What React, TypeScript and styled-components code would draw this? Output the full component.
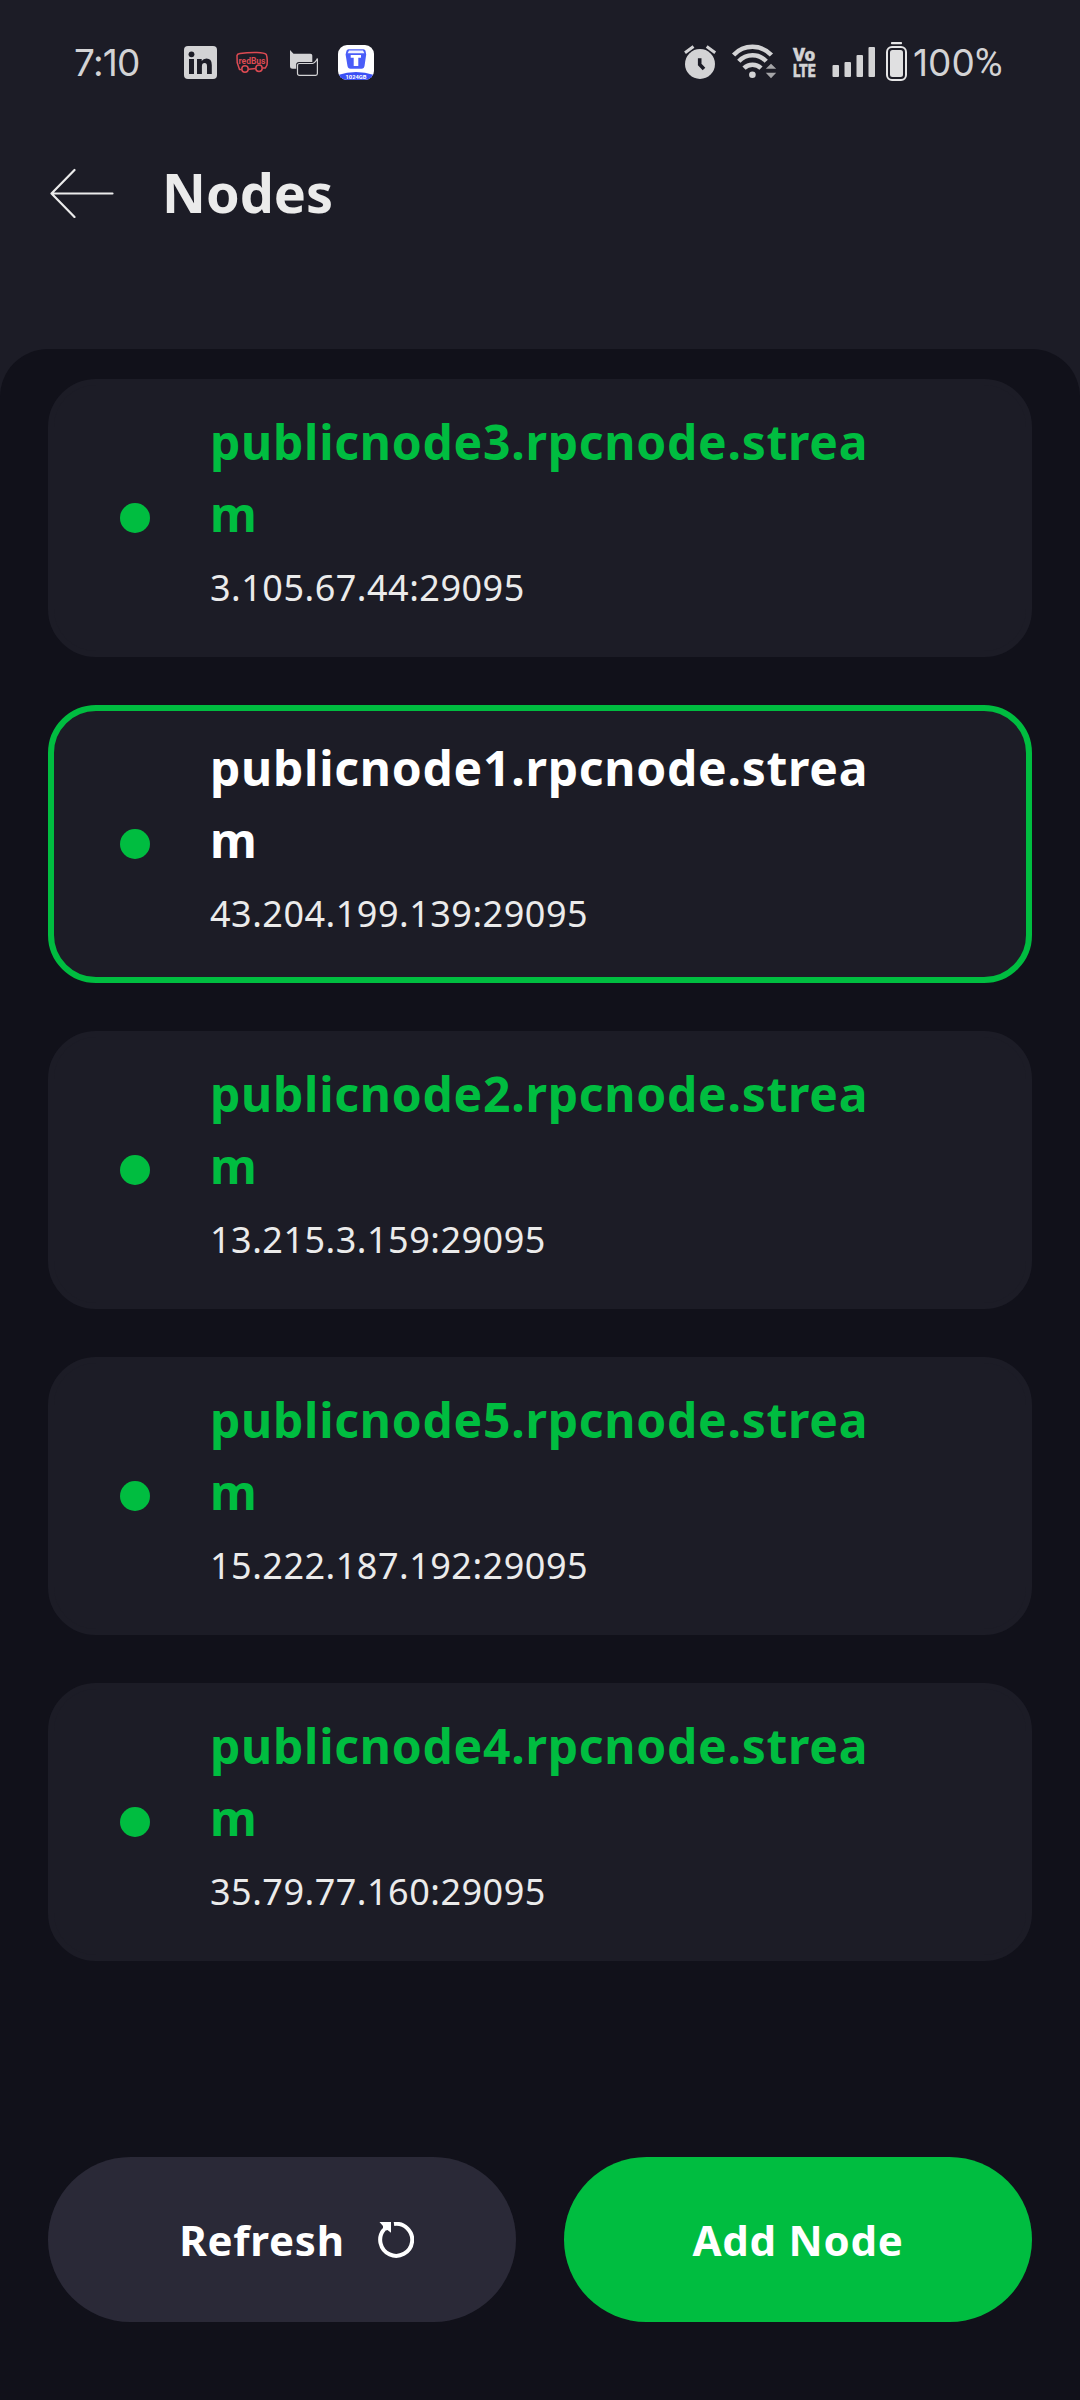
import React from "react";
import styled, { createGlobalStyle } from "styled-components";

const GREEN = "#00bd40";
const SURFACE = "#1c1c26";
const BACKDROP = "#11111a";
const STATUS = "#d3d3d5";

const GlobalStyle = createGlobalStyle`
  *, *::before, *::after { box-sizing: border-box; }
  body { margin: 0; background: ${SURFACE}; }
`;

const Screen = styled.div`
  width: 1080px;
  height: 2400px;
  display: flex;
  flex-direction: column;
  overflow: hidden;
  background: ${SURFACE};
  font-family: "Noto Sans", "Open Sans", sans-serif;
`;

const StatusBar = styled.div`
  display: flex;
  justify-content: space-between;
  height: 124px;
  padding: 42px 76px 0 74px;
  color: ${STATUS};
`;

const StatusGroup = styled.div`
  display: flex;
  align-items: flex-start;
  height: 40px;
`;

const StatusText = styled.span<{ $width: number; $gap?: number; $spacing?: number }>`
  width: ${(p) => p.$width}px;
  margin-left: ${(p) => p.$gap ?? 0}px;
  font-family: Inter, sans-serif;
  font-size: 37px;
  font-weight: 430;
  line-height: 41px;
  letter-spacing: ${(p) => p.$spacing ?? 0}px;
  white-space: nowrap;
`;

const Percent = styled.span`
  font-family: Roboto, sans-serif;
  font-size: 38px;
  line-height: 1;
`;

const StatusIcon = styled.svg<{ $gap: number }>`
  display: block;
  flex: none;
  height: 40px;
  margin-left: ${(p) => p.$gap}px;
  overflow: visible;
`;

const Header = styled.header`
  display: flex;
  align-items: center;
  height: 138px;
  padding-left: 49px;
  margin-bottom: 87px;
`;

const BackArrow = styled.svg`
  display: block;
  width: 66px;
  height: 50px;
`;

const Title = styled.h1`
  margin: 0 0 2px 47px;
  color: #ebebeb;
  font-size: 54px;
  line-height: 74px;
  font-weight: 700;
`;

const Panel = styled.main`
  flex: 1;
  display: flex;
  flex-direction: column;
  justify-content: space-between;
  padding: 30px 48px 78px;
  border-radius: 48px 48px 0 0;
  background: ${BACKDROP};
`;

const NodeList = styled.div`
  display: flex;
  flex-direction: column;
  gap: 48px;
`;

const NodeCard = styled.div<{ $selected: boolean }>`
  display: flex;
  align-items: center;
  height: 278px;
  padding-left: 66px;
  border: 6px solid ${(p) => (p.$selected ? GREEN : SURFACE)};
  border-radius: 48px;
  background: ${SURFACE};
`;

const StatusDot = styled.span`
  flex: none;
  width: 30px;
  height: 30px;
  border-radius: 50%;
  background: ${GREEN};
`;

const NodeInfo = styled.div`
  width: 672px;
  margin-left: 60px;
  padding-bottom: 15px;
`;

const NodeName = styled.div<{ $selected: boolean }>`
  color: ${(p) => (p.$selected ? "#ffffff" : GREEN)};
  font-size: 48px;
  line-height: 72px;
  font-weight: 700;
  letter-spacing: 0.75px;
  word-break: break-all;
`;

const NodeAddress = styled.div`
  margin-top: 11px;
  color: #ebebeb;
  font-size: 36px;
  line-height: 54px;
  letter-spacing: 0.5px;
`;

const Actions = styled.div`
  display: grid;
  grid-template-columns: 1fr 1fr;
  gap: 48px;
`;

const ActionButton = styled.button<{ $primary?: boolean }>`
  display: flex;
  align-items: center;
  justify-content: center;
  gap: 33px;
  height: 165px;
  padding: 0 0 0 ${(p) => (p.$primary ? 0 : 29)}px;
  border: 0;
  border-radius: 83px;
  background: ${(p) => (p.$primary ? GREEN : "#2a2937")};
  color: #ffffff;
  font: 700 42px/58px "Noto Sans", "Open Sans", sans-serif;
  letter-spacing: 0.75px;
`;

const RefreshIcon = styled.svg`
  display: block;
  width: 36px;
  height: 36px;
  margin-top: 1px;
`;

const nodes = [
  { name: "publicnode3.rpcnode.stream", address: "3.105.67.44:29095" },
  { name: "publicnode1.rpcnode.stream", address: "43.204.199.139:29095", selected: true },
  { name: "publicnode2.rpcnode.stream", address: "13.215.3.159:29095" },
  { name: "publicnode5.rpcnode.stream", address: "15.222.187.192:29095" },
  { name: "publicnode4.rpcnode.stream", address: "35.79.77.160:29095" },
];

const LinkedIn = () => (
  <StatusIcon $gap={37} width={33} viewBox="0 0 33 40">
    <rect x="0" y="4" width="33" height="33" rx="4" fill={STATUS} />
    <g fill={SURFACE}>
      <circle cx="7.500" cy="12.300" r="2.900" />
      <path d="M5 17H10V32H5Z" />
      <path d="M13 17H17.700V19.100Q19.300 16.600 22.500 16.600 27.800 16.600 27.800 23V32H23V24.200Q23 20.900 20.600 20.900 17.900 20.900 17.900 24.200V32H13Z" />
    </g>
  </StatusIcon>
);

const RedBus = () => (
  <StatusIcon $gap={19} width={33} viewBox="0 0 33 40">
    <g fill="none" stroke="#dc4a52" strokeWidth="1.500">
      <path d="M5.500 27.500H3.500L1.200 20.500 1 13.500Q1.300 12 4 11.600 12 10.300 21 10.500 28.500 10.600 30.300 12.600 31.800 16.500 31 23L29.300 26H26.500M12.500 27.300 19.500 26.500" />
      <circle cx="9" cy="27" r="3.200" />
      <circle cx="23" cy="26.200" r="3.200" />
    </g>
    <text x="2.500" y="22" fill="#dc4a52" fontFamily="Roboto, sans-serif" fontWeight="700" fontSize="9.200" textLength="27" lengthAdjust="spacingAndGlyphs">
      redBus
    </text>
  </StatusIcon>
);

const Chats = () => (
  <StatusIcon $gap={21} width={29} viewBox="0 0 29 40">
    <path d="M0 8 3.500 11.700H20.500Q22.300 11.700 22.300 13.500V20H9Q6.200 20 6.200 22.500V26.700H2.500Q0 26.700 0 24.200Z" fill={STATUS} />
    <path d="M27.400 16.500V31.500Q27.400 33.300 25.600 33.300H9.500Q7.500 33.300 7.500 31.500V23.500Q7.500 21.500 9.500 21.500H22.500Q25 21 27.400 16.500Z" fill="none" stroke={STATUS} strokeWidth="1.200" />
  </StatusIcon>
);

const StorageApp = () => (
  <StatusIcon $gap={19} width={36} viewBox="0 0 36 40">
    <defs>
      <clipPath id="app-tile">
        <rect x="0" y="3" width="36" height="35" rx="9" />
      </clipPath>
    </defs>
    <g clipPath="url(#app-tile)">
      <rect y="3" width="36" height="35" fill="#fff" />
      <path d="M0 33Q18 27 36 33V38H0Z" fill="#3b50f5" />
      <path d="M10.500 7.200H25.500Q27 7.200 27.500 8.700L28.200 12.500 26.600 23.500Q26.100 26.700 23.500 26.700H12.500Q9.900 26.700 9.400 23.500L7.600 12.500 8.500 8.700Q9 7.200 10.500 7.200Z" fill="#4a5df8" />
      <path d="M11 8.600H25L26.400 11.300H9.600Z" fill="#f0f2ff" />
      <path d="M12.700 13H23V15.800H20.300V24H15.700V15.800H12.700Z" fill="#fff" />
    </g>
    <text x="7.500" y="36.600" fill="#fff" fontFamily="Roboto, sans-serif" fontWeight="700" fontSize="5.600" textLength="21" lengthAdjust="spacingAndGlyphs">
      1024GB
    </text>
  </StatusIcon>
);

const Alarm = () => (
  <StatusIcon $gap={0} width={32} viewBox="0 0 32 40">
    <circle cx="16" cy="22" r="15" fill={STATUS} />
    <path d="M15.700 16.300V22.500L20 27" fill="none" stroke={SURFACE} strokeWidth="3.600" />
    <path d="M1 10.700 9.500 4.500M22.700 4.500 31.200 10.700" fill="none" stroke={STATUS} strokeWidth="3" />
  </StatusIcon>
);

const Wifi = () => (
  <StatusIcon $gap={16} width={45} viewBox="0 0 45 40">
    <g fill="none" stroke={STATUS} strokeWidth="4.500">
      <path d="M1.600 13A26 26 0 0 1 39.400 13" />
      <path d="M6.800 19.300A18.500 18.500 0 0 1 34.200 19.300" />
      <path d="M12 26.200A12 12 0 0 1 29 26.200" />
    </g>
    <circle cx="20.400" cy="32.700" r="3.300" fill={STATUS} />
    <path d="M39 21.700 44.200 26.700H33.800ZM33.800 30.800H44.200L39 36.200Z" fill="#a5a5a8" />
  </StatusIcon>
);

const VoLte = () => (
  <StatusIcon $gap={16} width={23} viewBox="0 0 23 40">
    <g fill={STATUS} stroke={STATUS} strokeWidth="0.500" fontFamily="Roboto, sans-serif" fontWeight="900" fontSize="19">
      <text x="0" y="19.200" textLength="22" lengthAdjust="spacingAndGlyphs">Vo</text>
      <text x="0" y="34.800" textLength="22.500" lengthAdjust="spacingAndGlyphs">LTE</text>
    </g>
  </StatusIcon>
);

const Signal = () => (
  <StatusIcon $gap={16} width={44} viewBox="0 0 44 40">
    <g fill={STATUS}>
      <rect x="0.500" y="23" width="6.500" height="12" rx="1" />
      <rect x="12.500" y="20" width="6.500" height="15" rx="1" />
      <rect x="24.500" y="13" width="6.500" height="22" rx="1" />
      <rect x="36.500" y="5" width="6.500" height="30" rx="1" />
    </g>
  </StatusIcon>
);

const Battery = () => (
  <StatusIcon $gap={10} width={21} viewBox="0 0 21 40">
    <rect x="5" y="0" width="11" height="2.200" rx="0.800" fill="#e6e6e7" />
    <rect x="1" y="5" width="19" height="33" rx="5" fill="none" stroke="#e6e6e7" strokeWidth="2" />
    <rect x="4" y="8" width="13" height="27" rx="2.500" fill="#e0e0e1" />
  </StatusIcon>
);

export default function App() {
  return (
    <Screen>
      <GlobalStyle />
      <StatusBar>
        <StatusGroup>
          <StatusText $width={73} $spacing={-0.8}>7:10</StatusText>
          <LinkedIn />
          <RedBus />
          <Chats />
          <StorageApp />
        </StatusGroup>
        <StatusGroup>
          <Alarm />
          <Wifi />
          <VoLte />
          <Signal />
          <Battery />
          <StatusText $width={91} $gap={6}>
            100<Percent>%</Percent>
          </StatusText>
        </StatusGroup>
      </StatusBar>
      <Header>
        <BackArrow viewBox="0 0 66 50" fill="none" stroke="#ebebeb" strokeWidth="2.200" strokeLinecap="round" strokeLinejoin="round">
          <path d="M25.500 2 2.500 25.500 25.500 49M2.500 25.500H63.500" />
        </BackArrow>
        <Title>Nodes</Title>
      </Header>
      <Panel>
        <NodeList>
          {nodes.map((node) => (
            <NodeCard key={node.name} $selected={!!node.selected}>
              <StatusDot />
              <NodeInfo>
                <NodeName $selected={!!node.selected}>{node.name}</NodeName>
                <NodeAddress>{node.address}</NodeAddress>
              </NodeInfo>
            </NodeCard>
          ))}
        </NodeList>
        <Actions>
          <ActionButton>
            Refresh
            <RefreshIcon viewBox="0 0 36 36">
              <path d="M16 2A16 16 0 1 1 6 7.500" fill="none" stroke="#fff" strokeWidth="4" />
              <path d="M1.500 0H13V10.700L9.500 8 5 9.500 5 4Z" fill="#fff" />
            </RefreshIcon>
          </ActionButton>
          <ActionButton $primary>Add Node</ActionButton>
        </Actions>
      </Panel>
    </Screen>
  );
}
